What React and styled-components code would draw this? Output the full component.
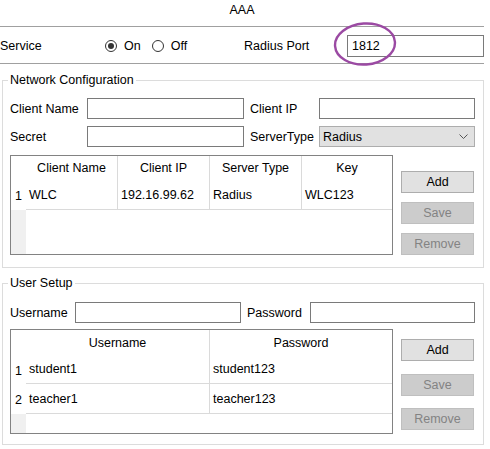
import React from 'react'
import styled, { createGlobalStyle } from 'styled-components'

const Global = createGlobalStyle`
  body {
    margin: 0;
    background: #ffffff;
    font-family: "Liberation Sans", Arial, sans-serif;
    font-size: 12.5px;
    color: #000;
  }
  * { box-sizing: border-box; }
`;

const Page = styled.div`
  width: 484px;
`;

const Title = styled.div`
  height: 27px;
  padding-bottom: 6px;
  line-height: 20px;
  text-align: center;
  border-bottom: 1px solid #a0a0a0;
`;

const ServiceRow = styled.div`
  height: 37px;
  display: grid;
  grid-template-columns: 105px 139px 103px 137px;
  align-items: center;
  border-bottom: 1px solid #a0a0a0;
  padding-top: 1px;
`;

const RadioGroup = styled.div`
  display: flex;
  align-items: center;
`;

const Radio = styled.span`
  width: 12px;
  height: 12px;
  border-radius: 50%;
  border: 1px solid #333;
  display: flex;
  align-items: center;
  justify-content: center;
  margin-right: 7px;
  &::after {
    content: '';
    width: 6px;
    height: 6px;
    border-radius: 50%;
    background: ${({ $checked }) => ($checked ? '#333' : 'transparent')};
  }
`;

const RadioText = styled.span`
  margin-right: 11px;
`;

const PortWrap = styled.div`
  position: relative;
`;

const Mark = styled.svg`
  position: absolute;
  left: -14px;
  top: -13px;
  pointer-events: none;
`;

const TextBox = styled.div`
  height: ${({ $h }) => $h || 21}px;
  border: 1px solid #7a7a7a;
  background: #fff;
  padding-left: 4px;
  line-height: ${({ $h }) => ($h || 21) - 2}px;
`;

const Group = styled.fieldset`
  margin: ${({ $top }) => $top}px 0 0 2px;
  width: 482px;
  border: 1px solid #dcdcdc;
  padding: ${({ $pt }) => $pt}px 8px ${({ $pb }) => $pb}px 7px;
  min-width: 0;
`;

const Legend = styled.legend`
  padding: 0 2px;
  margin-left: -2px;
  line-height: 14px;
`;

const FormGrid = styled.div`
  display: grid;
  grid-template-columns: ${({ $cols }) => $cols};
  row-gap: 7px;
  align-items: center;
`;

const Label = styled.span`
  padding-left: ${({ $indent }) => $indent || 0}px;
  white-space: nowrap;
`;

const Select = styled.div`
  height: 21px;
  border: 1px solid #adadad;
  background: #e1e1e1;
  display: flex;
  align-items: center;
  justify-content: space-between;
  padding: 0 6px 0 3px;
`;

const TableArea = styled.div`
  display: flex;
  gap: 8px;
  margin-top: ${({ $top }) => $top}px;
`;

const Table = styled.div`
  width: 383px;
  height: ${({ $h }) => $h}px;
  border: 1px solid #828282;
  background: linear-gradient(to right, #f0f0f0 15px, #ffffff 15px);
  display: flex;
  flex-direction: column;
`;

const Row = styled.div`
  display: grid;
  grid-template-columns: ${({ $cols }) => $cols};
  height: ${({ $h }) => $h}px;
`;

const HeadCell = styled.div`
  background: #fff;
  border-right: ${({ $last }) => ($last ? 'none' : '1px solid #dadada')};
  display: flex;
  align-items: center;
  justify-content: center;
`;

const NumCell = styled.div`
  background: #fff;
  display: flex;
  align-items: center;
  justify-content: center;
  padding-top: 2px;
`;

const Cell = styled.div`
  background: #fff;
  border-right: ${({ $last }) => ($last ? 'none' : '1px solid #dadada')};
  border-bottom: 1px solid #dadada;
  display: flex;
  align-items: center;
  padding-left: 3px;
  white-space: nowrap;
`;

const Buttons = styled.div`
  width: 73px;
  padding-top: ${({ $top }) => $top}px;
  display: flex;
  flex-direction: column;
  gap: ${({ $gap }) => $gap}px;
`;

const Button = styled.button`
  height: 22px;
  width: 73px;
  font: inherit;
  padding: 0;
  border: 1px solid ${({ disabled }) => (disabled ? '#bfbfbf' : '#adadad')};
  background: ${({ disabled }) => (disabled ? '#cccccc' : '#e1e1e1')};
  color: ${({ disabled }) => (disabled ? '#838383' : '#000')};
`;

const clientCols = '15px 92px 92px 92px 90px';
const userCols = '15px 184px 182px';

const clients = [{ name: 'WLC', ip: '192.16.99.62', type: 'Radius', key: 'WLC123' }];
const users = [
  { name: 'student1', pass: 'student123' },
  { name: 'teacher1', pass: 'teacher123' },
];

const ButtonStack = ({ top, gap }) => (
  <Buttons $top={top} $gap={gap}>
    <Button>Add</Button>
    <Button disabled>Save</Button>
    <Button disabled>Remove</Button>
  </Buttons>
);

export default function App() {
  return (
    <Page>
      <Global />
      <Title>AAA</Title>
      <ServiceRow>
        <Label>Service</Label>
        <RadioGroup>
          <Radio $checked />
          <RadioText>On</RadioText>
          <Radio />
          <RadioText>Off</RadioText>
        </RadioGroup>
        <Label>Radius Port</Label>
        <PortWrap>
          <TextBox $h={22}>1812</TextBox>
          <Mark width="66" height="48" viewBox="0 0 66 48">
            <ellipse cx="32" cy="22" rx="30" ry="20.5" fill="none" stroke="#9b4aa3" strokeWidth="2.4" transform="rotate(-4 32 22)" />
          </Mark>
        </PortWrap>
      </ServiceRow>

      <Group $top={9} $pt={11} $pb={12}>
        <Legend>Network Configuration</Legend>
        <FormGrid $cols="77px 157px 75px 156px">
          <Label>Client Name</Label>
          <TextBox />
          <Label $indent={6}>Client IP</Label>
          <TextBox />
          <Label>Secret</Label>
          <TextBox />
          <Label $indent={6}>ServerType</Label>
          <Select>
            <span>Radius</span>
            <svg width="9" height="5" viewBox="0 0 9 5">
              <polyline points="0.5,0.5 4.5,4.5 8.5,0.5" fill="none" stroke="#555" strokeWidth="1" />
            </svg>
          </Select>
        </FormGrid>
        <TableArea $top={8}>
          <Table $h={100}>
            <Row $cols={clientCols} $h={24}>
              <NumCell />
              <HeadCell>Client Name</HeadCell>
              <HeadCell>Client IP</HeadCell>
              <HeadCell>Server Type</HeadCell>
              <HeadCell $last>Key</HeadCell>
            </Row>
            {clients.map((c, i) => (
              <Row key={i} $cols={clientCols} $h={30}>
                <NumCell>{i + 1}</NumCell>
                <Cell>{c.name}</Cell>
                <Cell>{c.ip}</Cell>
                <Cell>{c.type}</Cell>
                <Cell $last>{c.key}</Cell>
              </Row>
            ))}
          </Table>
          <ButtonStack top={16} gap={9} />
        </TableArea>
      </Group>

      <Group $top={8} $pt={12} $pb={10}>
        <Legend>User Setup</Legend>
        <FormGrid $cols="65px 166px 69px 165px">
          <Label>Username</Label>
          <TextBox />
          <Label $indent={6}>Password</Label>
          <TextBox />
        </FormGrid>
        <TableArea $top={6}>
          <Table $h={105}>
            <Row $cols={userCols} $h={25}>
              <NumCell />
              <HeadCell>Username</HeadCell>
              <HeadCell $last>Password</HeadCell>
            </Row>
            {users.map((u, i) => (
              <Row key={i} $cols={userCols} $h={i === 0 ? 29 : 30}>
                <NumCell>{i + 1}</NumCell>
                <Cell>{u.name}</Cell>
                <Cell $last>{u.pass}</Cell>
              </Row>
            ))}
          </Table>
          <ButtonStack top={10} gap={12.5} />
        </TableArea>
      </Group>
    </Page>
  )
}
